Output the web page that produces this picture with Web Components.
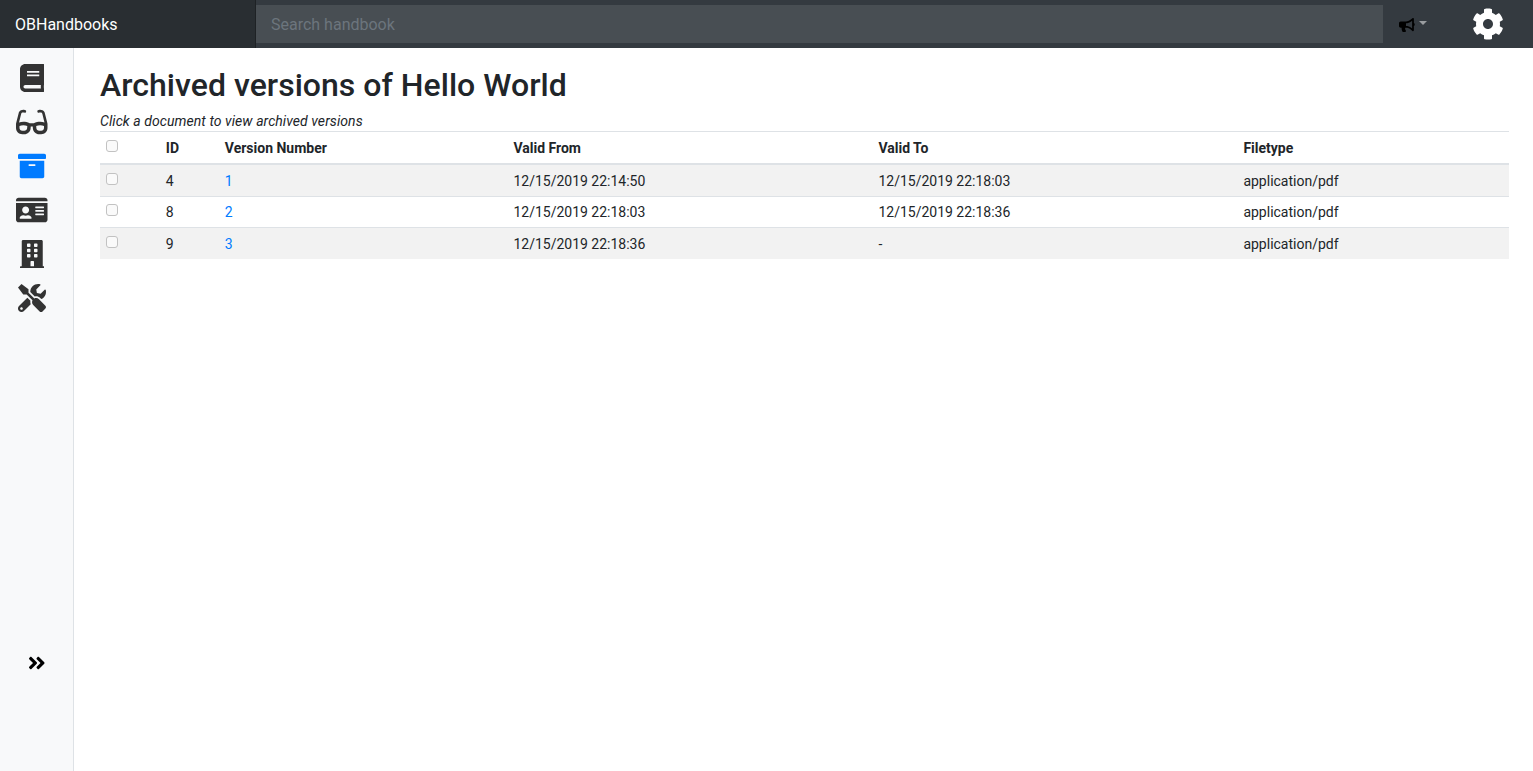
<!DOCTYPE html>
<html lang="en">
<head>
<meta charset="utf-8">
<title>OBHandbooks</title>
<style>
  html, body { margin: 0; height: 100%; }
  body {
    display: flex;
    flex-direction: column;
    height: 771px;
    overflow: hidden;
    font-family: Roboto, "Liberation Sans", sans-serif;
    color: #212529;
    background: #fff;
  }
  .shell { display: flex; flex: 1; min-height: 0; }
</style>
</head>
<body>
<ob-navbar brand="OBHandbooks" placeholder="Search handbook"></ob-navbar>
<div class="shell">
  <ob-sidebar></ob-sidebar>
  <ob-main heading="Archived versions of Hello World" hint="Click a document to view archived versions">
    <ob-version-table></ob-version-table>
  </ob-main>
</div>

<script>
/* Font Awesome style solid glyphs, keyed by name: [viewBox width, path] */
const ICONS = {
  book: [448, "M448 360V24c0-13.3-10.7-24-24-24H96C43 0 0 43 0 96v320c0 53 43 96 96 96h328c13.3 0 24-10.7 24-24v-16c0-7.5-3.5-14.3-8.9-18.7-4.2-15.4-4.2-59.3 0-74.7 5.4-4.3 8.9-11.1 8.9-18.6zM128 134c0-3.3 2.7-6 6-6h212c3.3 0 6 2.7 6 6v20c0 3.3-2.7 6-6 6H134c-3.3 0-6-2.7-6-6v-20zm0 64c0-3.3 2.7-6 6-6h212c3.3 0 6 2.7 6 6v20c0 3.3-2.7 6-6 6H134c-3.3 0-6-2.7-6-6v-20zm253.4 250H96c-17.7 0-32-14.3-32-32 0-17.6 14.4-32 32-32h285.4c-1.9 17.1-1.9 46.9 0 64z"],
  glasses: [576, "M574.1 280.37L528.75 98.66c-5.91-23.7-21.59-44.05-43-55.81-21.44-11.73-46.97-14.11-70.19-6.33l-15.25 5.08c-8.39 2.79-12.92 11.86-10.12 20.24l5.06 15.18c2.79 8.38 11.85 12.91 20.23 10.12l13.18-4.39c10.87-3.62 23-3.57 33.16 1.73 10.29 5.37 17.57 14.56 20.37 25.82l38.46 153.82c-22.19-6.81-49.79-12.46-81.2-12.46-34.77 0-73.98 7.02-114.85 26.74h-73.18c-40.87-19.74-80.08-26.75-114.86-26.75-31.42 0-59.02 5.65-81.21 12.46l38.46-153.82c2.79-11.25 10.09-20.45 20.38-25.81 10.16-5.3 22.28-5.35 33.15-1.73l13.17 4.39c8.38 2.79 17.44-1.74 20.23-10.12l5.06-15.18c2.8-8.38-1.73-17.45-10.12-20.24l-15.25-5.08c-23.22-7.78-48.75-5.41-70.19 6.33-21.41 11.77-37.09 32.11-43 55.8L1.9 280.37A64.218 64.218 0 0 0 0 295.86v70.25C0 429.01 51.58 480 115.2 480h37.12c60.28 0 110.37-45.94 114.88-105.37l2.93-38.63h35.75l2.93 38.63C313.31 434.06 363.4 480 423.68 480h37.12c63.62 0 115.2-50.99 115.2-113.88v-70.25c0-5.23-.64-10.43-1.9-15.5zm-370.72 89.42c-1.97 25.91-24.4 46.21-51.06 46.21H115.2C86.97 416 64 393.62 64 366.11v-37.54c18.12-6.49 43.42-12.92 72.58-12.92 23.86 0 47.26 4.33 69.93 12.92l-3.13 41.22zM512 366.12c0 27.51-22.97 49.88-51.2 49.88h-37.12c-26.67 0-49.1-20.3-51.06-46.21l-3.13-41.22c22.67-8.59 46.08-12.92 69.95-12.92 29.12 0 54.43 6.44 72.55 12.93v37.54z"],
  archive: [512, "M32 448c0 17.7 14.3 32 32 32h384c17.7 0 32-14.3 32-32V160H32v288zm160-212c0-6.6 5.4-12 12-12h104c6.6 0 12 5.4 12 12v8c0 6.6-5.4 12-12 12H204c-6.6 0-12-5.4-12-12v-8zM480 32H32C14.3 32 0 46.3 0 64v48c0 8.8 7.2 16 16 16h480c8.8 0 16-7.2 16-16V64c0-17.7-14.3-32-32-32z"],
  idcard: [576, "M528 32H48C21.5 32 0 53.5 0 80v16h576V80c0-26.5-21.5-48-48-48zM0 432c0 26.5 21.5 48 48 48h480c26.5 0 48-21.5 48-48V128H0v304zm352-232c0-4.4 3.6-8 8-8h144c4.4 0 8 3.6 8 8v16c0 4.4-3.6 8-8 8H360c-4.4 0-8-3.6-8-8v-16zm0 64c0-4.4 3.6-8 8-8h144c4.4 0 8 3.6 8 8v16c0 4.4-3.6 8-8 8H360c-4.4 0-8-3.6-8-8v-16zm0 64c0-4.4 3.6-8 8-8h144c4.4 0 8 3.6 8 8v16c0 4.4-3.6 8-8 8H360c-4.4 0-8-3.6-8-8v-16zM176 192c35.3 0 64 28.7 64 64s-28.7 64-64 64-64-28.7-64-64 28.7-64 64-64zM67.1 396.2C75.5 370.5 99.6 352 128 352h8.2c12.3 5.1 25.7 8 39.8 8s27.6-2.9 39.8-8h8.2c28.4 0 52.5 18.5 60.9 44.2 3.2 9.9-5.2 19.8-15.6 19.8H82.7c-10.4 0-18.8-10-15.6-19.8z"],
  building: [448, "M436 480h-20V24c0-13.255-10.745-24-24-24H56C42.745 0 32 10.745 32 24v456H12c-6.627 0-12 5.373-12 12v20h448v-20c0-6.627-5.373-12-12-12zM128 76c0-6.627 5.373-12 12-12h40c6.627 0 12 5.373 12 12v40c0 6.627-5.373 12-12 12h-40c-6.627 0-12-5.373-12-12V76zm0 96c0-6.627 5.373-12 12-12h40c6.627 0 12 5.373 12 12v40c0 6.627-5.373 12-12 12h-40c-6.627 0-12-5.373-12-12v-40zm52 148h-40c-6.627 0-12-5.373-12-12v-40c0-6.627 5.373-12 12-12h40c6.627 0 12 5.373 12 12v40c0 6.627-5.373 12-12 12zm76 160h-64v-84c0-6.627 5.373-12 12-12h40c6.627 0 12 5.373 12 12v84zm64-172c0 6.627-5.373 12-12 12h-40c-6.627 0-12-5.373-12-12v-40c0-6.627 5.373-12 12-12h40c6.627 0 12 5.373 12 12v40zm0-96c0 6.627-5.373 12-12 12h-40c-6.627 0-12-5.373-12-12v-40c0-6.627 5.373-12 12-12h40c6.627 0 12 5.373 12 12v40zm0-96c0 6.627-5.373 12-12 12h-40c-6.627 0-12-5.373-12-12V76c0-6.627 5.373-12 12-12h40c6.627 0 12 5.373 12 12v40z"],
  tools: [512, "M501.1 395.7L384 278.6c-23.1-23.1-57.6-27.6-85.4-13.9L192 158.1V96L64 0 0 64l96 128h62.1l106.6 106.6c-13.6 27.8-9.2 62.3 13.9 85.4l117.1 117.1c14.6 14.6 38.2 14.6 52.7 0l52.7-52.7c14.5-14.6 14.5-38.2 0-52.7zM331.7 225c28.3 0 54.9 11 74.9 31l19.4 19.4c15.8-6.9 30.8-16.5 43.8-29.5 37.1-37.1 49.7-89.3 37.9-136.7-2.2-9-13.5-12.1-20.1-5.5l-74.4 74.4-67.9-11.3L334 98.9l74.4-74.4c6.6-6.6 3.4-17.9-5.7-20.2-47.4-11.7-99.6.9-136.6 37.9-28.5 28.5-41.9 66.1-41.2 103.6l82.1 82.1c8.1-1.9 16.5-2.9 24.7-2.9zm-103.9 82l-56.7-56.7L18.7 402.8c-25 25-25 65.5 0 90.5s65.5 25 90.5 0l123.6-123.6c-7.6-19.9-9.9-41.6-5-62.7zM64 472c-13.2 0-24-10.8-24-24 0-13.3 10.7-24 24-24s24 10.7 24 24c0 13.2-10.7 24-24 24z"],
  cog: [512, "M487.4 315.7l-42.6-24.6c4.3-23.2 4.3-47 0-70.2l42.6-24.6c4.9-2.8 7.1-8.6 5.5-14-11.1-35.6-30-67.8-54.7-94.6-3.8-4.1-10-5.1-14.8-2.3L380.8 110c-17.9-15.4-38.5-27.3-60.8-35.1V25.8c0-5.6-3.9-10.5-9.4-11.7-36.7-8.2-74.3-7.8-109.2 0-5.5 1.2-9.4 6.1-9.4 11.7V75c-22.2 7.9-42.8 19.8-60.8 35.1L88.7 85.5c-4.9-2.8-11-1.9-14.8 2.3-24.7 26.7-43.6 58.9-54.7 94.6-1.7 5.4.6 11.2 5.5 14L67.3 221c-4.3 23.2-4.3 47 0 70.2l-42.6 24.6c-4.9 2.8-7.1 8.6-5.5 14 11.1 35.6 30 67.8 54.7 94.6 3.8 4.1 10 5.1 14.8 2.3l42.6-24.6c17.9 15.4 38.5 27.3 60.8 35.1v49.2c0 5.6 3.9 10.5 9.4 11.7 36.7 8.2 74.3 7.8 109.2 0 5.5-1.2 9.4-6.1 9.4-11.7v-49.2c22.2-7.9 42.8-19.8 60.8-35.1l42.6 24.6c4.9 2.8 11 1.9 14.8-2.3 24.7-26.7 43.6-58.9 54.7-94.6 1.5-5.5-.7-11.3-5.6-14.1zM256 336c-44.1 0-80-35.9-80-80s35.9-80 80-80 80 35.9 80 80-35.9 80-80 80z"],
  bullhorn: [576, "M576 240c0-23.63-12.95-44.04-32-55.12V32.01C544 23.26 537.02 0 512 0c-7.12 0-14.19 2.38-19.98 7.02l-85.03 68.03C364.28 109.19 310.66 128 256 128H64c-35.35 0-64 28.65-64 64v96c0 35.35 28.65 64 64 64h33.7c-1.39 10.48-2.18 21.14-2.18 32 0 39.77 9.26 77.35 25.56 110.94 5.19 10.69 16.52 17.06 28.4 17.06h74.28c26.05 0 41.69-29.84 25.9-50.56-16.4-21.52-26.15-48.36-26.15-77.44 0-11.11 1.62-21.79 4.41-32H256c54.66 0 108.28 18.81 150.98 52.95l85.03 68.03a32.023 32.023 0 0 0 19.98 7.02c24.92 0 32-22.78 32-32V295.13C563.05 284.04 576 263.63 576 240zm-96 141.42l-33.05-26.44C392.95 311.78 325.12 288 256 288v-96c69.12 0 136.95-23.78 190.95-66.98L480 98.58v282.84z"],
  angles: [448, "M224.3 273l-136 136c-9.4 9.4-24.6 9.4-33.9 0l-22.6-22.6c-9.4-9.4-9.4-24.6 0-33.9l96.4-96.4-96.4-96.4c-9.4-9.4-9.4-24.6 0-33.9L54.3 103c9.4-9.4 24.6-9.4 33.9 0l136 136c9.5 9.4 9.5 24.6.1 34zm192-34l-136-136c-9.4-9.4-24.6-9.4-33.9 0l-22.6 22.6c-9.4 9.4-9.4 24.6 0 33.9l96.4 96.4-96.4 96.4c-9.4 9.4-9.4 24.6 0 33.9l22.6 22.6c9.4 9.4 24.6 9.4 33.9 0l136-136c9.4-9.2 9.4-24.4 0-33.8z"]
};

class ObIcon extends HTMLElement {
  connectedCallback() {
    const [w, d] = ICONS[this.getAttribute("name")];
    const size = Number(this.getAttribute("size")) || 28;
    this.attachShadow({ mode: "open" }).innerHTML = `
      <style>
        :host { display: inline-flex; line-height: 0; }
        svg { display: block; fill: currentColor; }
      </style>
      <svg xmlns="http://www.w3.org/2000/svg" viewBox="0 0 ${w} 512" width="${w / 512 * size}" height="${size}">
        <path d="${d}"></path>
      </svg>`;
  }
}
customElements.define("ob-icon", ObIcon);

class ObNavbar extends HTMLElement {
  connectedCallback() {
    this.attachShadow({ mode: "open" }).innerHTML = `
      <style>
        :host {
          display: flex;
          flex: none;
          height: 48px;
          background: #343a40;
          align-items: stretch;
        }
        .brand {
          width: 256px;
          box-sizing: border-box;
          padding-left: 15px;
          display: flex;
          align-items: center;
          font-size: 16px;
          color: #fff;
          background: #292e32;
          box-shadow: inset -1px 0 0 rgba(0, 0, 0, .25);
        }
        .search {
          flex: 1;
          display: flex;
          align-items: center;
          min-width: 0;
        }
        input {
          width: 100%;
          height: 38px;
          box-sizing: border-box;
          border: 0;
          outline: 0;
          padding: 6px 15px;
          font: 16px Roboto, "Liberation Sans", sans-serif;
          color: #fff;
          background: rgba(255, 255, 255, .1);
        }
        input::placeholder { color: #6c757d; opacity: 1; }
        .notify {
          width: 150px;
          flex: none;
          display: flex;
          align-items: center;
          padding-left: 16px;
          box-sizing: border-box;
          color: #000;
        }
        .horn { margin-top: 2px; }
        .caret {
          margin: -3px 0 0 4px;
          border-top: 4.8px solid rgba(255, 255, 255, .5);
          border-left: 4.2px solid transparent;
          border-right: 4.2px solid transparent;
        }
        .cog { margin-left: auto; margin-right: 29px; color: #fff; }
      </style>
      <div class="brand">${this.getAttribute("brand")}</div>
      <div class="search"><input type="text" placeholder="${this.getAttribute("placeholder")}"></div>
      <div class="notify">
        <ob-icon class="horn" name="bullhorn" size="14"></ob-icon>
        <span class="caret"></span>
        <ob-icon class="cog" name="cog" size="32"></ob-icon>
      </div>`;
  }
}
customElements.define("ob-navbar", ObNavbar);

class ObSidebar extends HTMLElement {
  connectedCallback() {
    const items = ["book", "glasses", "archive", "idcard", "building", "tools"];
    this.attachShadow({ mode: "open" }).innerHTML = `
      <style>
        :host {
          display: flex;
          flex-direction: column;
          flex: none;
          width: 74px;
          box-sizing: border-box;
          padding-top: 8px;
          background: #f8f9fa;
          border-right: 1px solid #dee2e6;
          color: #333;
        }
        a {
          height: 44px;
          width: 64px;
          display: flex;
          align-items: center;
          justify-content: center;
          color: inherit;
        }
        a.active { color: #007bff; }
        .toggle {
          margin-top: auto;
          margin-bottom: 98px;
          margin-left: 5px;
          color: #000;
          height: 20px;
        }
      </style>
      ${items.map(name => `
        <a href="#" class="${name === "archive" ? "active" : ""}"><ob-icon name="${name}" size="28"></ob-icon></a>
      `).join("")}
      <a href="#" class="toggle"><ob-icon name="angles" size="20"></ob-icon></a>`;
  }
}
customElements.define("ob-sidebar", ObSidebar);

class ObMain extends HTMLElement {
  connectedCallback() {
    this.attachShadow({ mode: "open" }).innerHTML = `
      <style>
        :host {
          display: block;
          flex: 1;
          min-width: 0;
          padding: 0 24px 0 26px;
        }
        h2 {
          margin: 0;
          padding-top: 18px;
          font-size: 32px;
          font-weight: 500;
          line-height: 38.4px;
          letter-spacing: .03px;
          color: #212529;
        }
        p {
          margin: 7px 0 0;
          font-size: 14px;
          font-style: italic;
          line-height: 20px;
          letter-spacing: .07px;
          color: #212529;
        }
      </style>
      <h2>${this.getAttribute("heading")}</h2>
      <p>${this.getAttribute("hint")}</p>
      <slot></slot>`;
  }
}
customElements.define("ob-main", ObMain);

class ObVersionTable extends HTMLElement {
  connectedCallback() {
    const rows = [
      [4, 1, "12/15/2019 22:14:50", "12/15/2019 22:18:03", "application/pdf"],
      [8, 2, "12/15/2019 22:18:03", "12/15/2019 22:18:36", "application/pdf"],
      [9, 3, "12/15/2019 22:18:36", "-", "application/pdf"]
    ];
    this.attachShadow({ mode: "open" }).innerHTML = `
      <style>
        :host { display: block; font-size: 14px; line-height: 21px; color: #212529; }
        table { width: 100%; border-collapse: collapse; table-layout: fixed; }
        th, td {
          padding: 5.8px 4.8px 3.8px;
          text-align: left;
          vertical-align: top;
          border-top: 1px solid #dee2e6;
        }
        th { font-weight: 700; vertical-align: bottom; border-bottom: 2px solid #dee2e6; }
        tbody tr:nth-child(odd) { background: #f2f2f2; }
        a { color: #007bff; text-decoration: none; }
        input {
          appearance: none;
          display: inline-block;
          vertical-align: top;
          box-sizing: border-box;
          width: 12px;
          height: 12px;
          margin: 2px 0 0 1.2px;
          background: #fafafa;
          border: 1.5px solid #c2c2c2;
          border-radius: 3px;
        }
      </style>
      <table>
        <colgroup>
          <col style="width:61px"><col style="width:59px"><col style="width:288.6px">
          <col style="width:365px"><col style="width:365px"><col>
        </colgroup>
        <thead>
          <tr>
            <th><input type="checkbox"></th><th>ID</th><th>Version Number</th>
            <th>Valid From</th><th>Valid To</th><th>Filetype</th>
          </tr>
        </thead>
        <tbody>
          ${rows.map(r => `
            <tr>
              <td><input type="checkbox"></td>
              <td>${r[0]}</td>
              <td><a href="#">${r[1]}</a></td>
              <td>${r[2]}</td><td>${r[3]}</td><td>${r[4]}</td>
            </tr>`).join("")}
        </tbody>
      </table>`;
  }
}
customElements.define("ob-version-table", ObVersionTable);
</script>
</body>
</html>
